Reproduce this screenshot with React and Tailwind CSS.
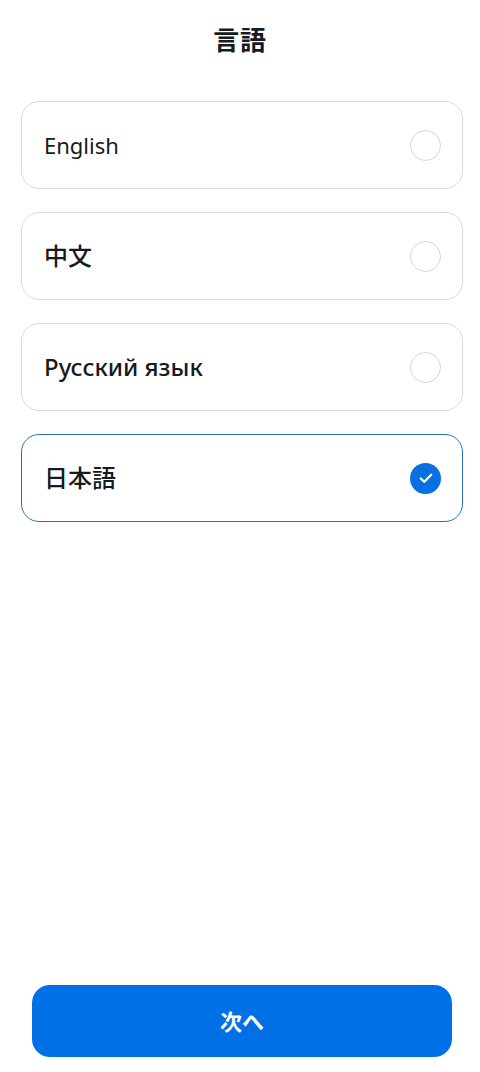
const languages = [
  { label: 'English', selected: false, cls: 'text-[22px]' },
  { label: '中文', selected: false, cls: 'text-[24px] font-medium' },
  { label: 'Русский язык', selected: false, cls: 'text-[24px] font-medium' },
  { label: '日本語', selected: true, cls: 'text-[24px] font-medium' },
]

function Radio({ checked }) {
  if (checked) {
    return (
      <span className="w-[31px] h-[31px] rounded-full bg-[#0a6fe0] flex items-center justify-center">
        <svg width="20" height="20" viewBox="0 0 16 16" fill="none">
          <path d="M3.8 8.4l2.8 2.6 5.6-5.6" stroke="white" strokeWidth="1.8" strokeLinecap="round" strokeLinejoin="round" />
        </svg>
      </span>
    )
  }
  return <span className="w-[31px] h-[31px] rounded-full border-[1.5px] border-[#d6d6d6] bg-white" />
}

export default function App() {
  return (
    <div
      className="w-[480px] h-[1072px] bg-white flex flex-col"
      style={{ fontFamily: '"Noto Sans", "Noto Sans CJK JP", sans-serif' }}
    >
      <h1 className="h-[80px] flex items-center justify-center text-[26px] font-bold text-[#161a22] tracking-wide">
        言語
      </h1>
      <div className="flex flex-col gap-[23px] pl-[21px] pr-[17px] pt-[21px]">
        {languages.map((l) => (
          <div
            key={l.label}
            className={
              'h-[88px] rounded-[18px] border-[1.5px] flex items-center justify-between pl-[22px] pr-[21px] ' +
              (l.selected ? 'border-[#2a70c0]' : 'border-[#dadada]')
            }
          >
            <span className={'text-[#161a22] ' + l.cls}>{l.label}</span>
            <Radio checked={l.selected} />
          </div>
        ))}
      </div>
      <div className="flex-1" />
      <div className="pl-[32px] pr-[28px] pb-[15px]">
        <button className="w-full h-[72px] rounded-[18px] bg-[#0070e6] text-white text-[22px] font-bold">
          次へ
        </button>
      </div>
    </div>
  )
}
